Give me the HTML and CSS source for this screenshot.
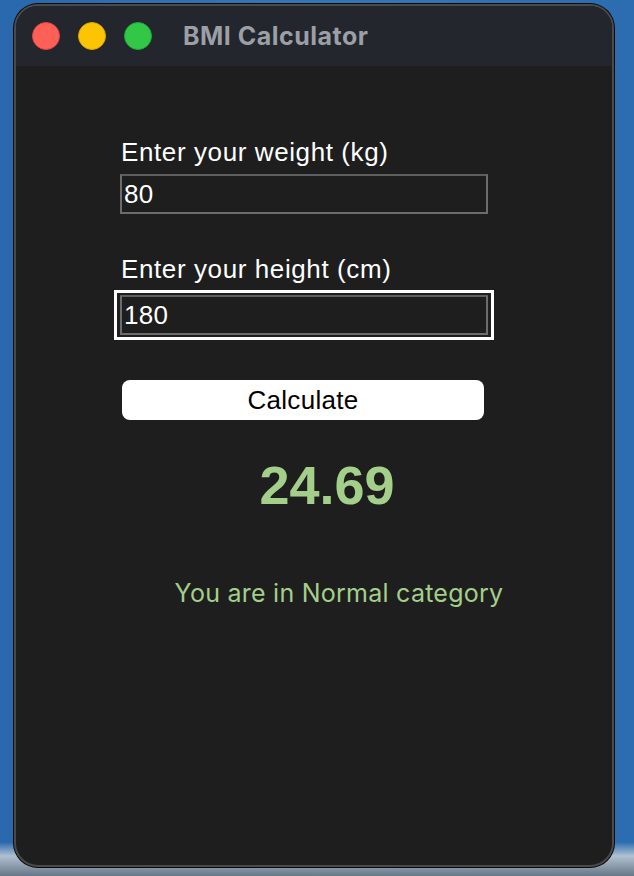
FILE: index.html
```html
<!DOCTYPE html>
<html lang="en">
<head>
<meta charset="utf-8">
<title>BMI Calculator</title>
<link rel="stylesheet" href="styles.css">
</head>
<body>
<div class="desktop">
  <div class="window">
    <div class="titlebar">
      <div class="lights">
        <span class="light red"></span>
        <span class="light yellow"></span>
        <span class="light green"></span>
      </div>
      <div class="title">BMI Calculator</div>
    </div>
    <div class="content">
      <div class="label">Enter your weight (kg)</div>
      <div class="field field-weight">80</div>
      <div class="label label-height">Enter your height (cm)</div>
      <div class="focus-ring">
        <div class="field">180</div>
      </div>
      <div class="button">Calculate</div>
      <div class="bmi">24.69</div>
      <div class="category">You are in Normal category</div>
    </div>
  </div>
</div>
</body>
</html>
```

FILE: styles.css
```css
html, body {
  margin: 0;
  padding: 0;
}

body {
  width: 634px;
  height: 876px;
  overflow: hidden;
  background:
    linear-gradient(to bottom, rgba(0,0,0,0) 0px, rgba(0,0,0,0) 842px, rgba(200,208,216,0.85) 856px, rgba(110,120,130,0.9) 876px),
    linear-gradient(to right, #2a68ad 0%, #3477b8 50%, #2c6cb0 100%);
}

.desktop {
  padding: 4px 0 0 14px;
}

.window {
  width: 596px;
  height: 859px;
  border: 2px solid #4a4a4a;
  border-radius: 24px;
  box-shadow: 0 0 0 1px #0b0b0b;
  overflow: hidden;
  background: #1e1e1e;
  display: flex;
  flex-direction: column;
}

.titlebar {
  height: 60px;
  flex: none;
  background: #23262d;
  display: flex;
  align-items: center;
  padding-left: 16px;
}

.lights {
  display: flex;
  gap: 18px;
}

.light {
  width: 26px;
  height: 26px;
  border-radius: 50%;
  border: 1px solid transparent;
}

.red { background: #fe5f57; border-color: #e2463f; }
.yellow { background: #fdc500; border-color: #dea600; }
.green { background: #33c748; border-color: #1ea932; }

.title {
  margin-left: 31px;
  font-family: "Inter", "Liberation Sans", sans-serif;
  font-weight: 700;
  font-size: 25px;
  color: #9c9fa6;
  letter-spacing: 0.5px;
}

.content {
  flex: 1;
  padding: 71px 0 0 104px;
  display: flex;
  flex-direction: column;
  align-items: flex-start;
  font-family: "Liberation Sans", Arial, sans-serif;
}

.label {
  font-size: 26px;
  line-height: 30px;
  color: #ffffff;
  margin-left: 1px;
  letter-spacing: 0.6px;
}

.label-height {
  margin-top: 40px;
}

.field {
  box-sizing: border-box;
  width: 368px;
  height: 40px;
  border: 2px solid #6c6c6c;
  border-top-color: #5e5e5e;
  background: #1e1e1e;
  color: #ffffff;
  font-size: 26px;
  line-height: 36px;
  padding-left: 2px;
  letter-spacing: 0.3px;
}

.field-weight {
  margin-top: 7px;
}

.focus-ring {
  margin-top: 6px;
  margin-left: -6px;
  border: 3px solid #ffffff;
  padding: 2px 3px;
}

.button {
  margin-top: 40px;
  margin-left: 2px;
  width: 362px;
  height: 40px;
  border-radius: 8px;
  background: #ffffff;
  color: #000000;
  font-size: 26px;
  line-height: 40px;
  text-align: center;
  letter-spacing: 0.3px;
}

.bmi {
  margin-top: 35px;
  width: 414px;
  text-align: center;
  font-weight: 700;
  font-size: 54px;
  line-height: 60px;
  color: #a3cf8b;
}

.category {
  margin-top: 63px;
  width: 438px;
  text-align: center;
  font-family: "Inter", "Liberation Sans", sans-serif;
  font-size: 25px;
  line-height: 30px;
  color: #a3cf8b;
  letter-spacing: 0.25px;
}
```
